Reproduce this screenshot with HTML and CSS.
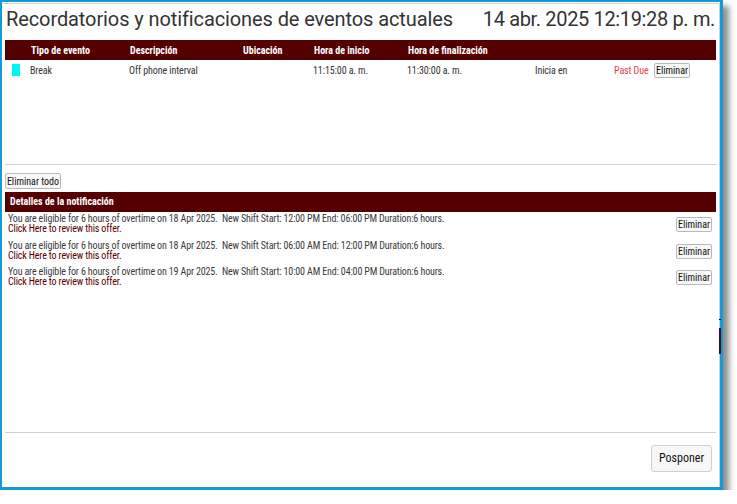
FILE: index.html
```html
<!DOCTYPE html>
<html lang="es">
<head>
<meta charset="utf-8">
<link rel="stylesheet" href="styles.css">
</head>
<body>
<div class="dialog">
  <div class="frame">
    <div class="title-row">
      <h1 class="title">Recordatorios y notificaciones de eventos actuales</h1>
      <div class="clock">14 abr. 2025 12:19:28 p. m.</div>
    </div>

    <div class="events">
      <div class="grid head">
        <span></span>
        <span>Tipo de evento</span>
        <span>Descripción</span>
        <span>Ubicación</span>
        <span>Hora de inicio</span>
        <span>Hora de finalización</span>
        <span></span>
        <span></span>
        <span></span>
      </div>
      <div class="grid row">
        <span><i class="swatch"></i></span>
        <span>Break</span>
        <span>Off phone interval</span>
        <span></span>
        <span>11:15:00 a. m.</span>
        <span>11:30:00 a. m.</span>
        <span>Inicia en</span>
        <span class="due">Past Due</span>
        <span><button class="btn del">Eliminar</button></span>
      </div>
    </div>

    <div class="clear-row"><button class="btn all">Eliminar todo</button></div>

    <div class="notifs">
      <div class="bar">Detalles de la notificación</div>
      <div class="notif">
        <div class="msg">
          <div>You are eligible for 6 hours of overtime on 18 Apr 2025.&nbsp; New Shift Start: 12:00 PM End: 06:00 PM Duration:6 hours.</div>
          <a class="link">Click Here to review this offer.</a>
        </div>
        <button class="btn del">Eliminar</button>
      </div>
      <div class="notif">
        <div class="msg">
          <div>You are eligible for 6 hours of overtime on 18 Apr 2025.&nbsp; New Shift Start: 06:00 AM End: 12:00 PM Duration:6 hours.</div>
          <a class="link">Click Here to review this offer.</a>
        </div>
        <button class="btn del">Eliminar</button>
      </div>
      <div class="notif">
        <div class="msg">
          <div>You are eligible for 6 hours of overtime on 19 Apr 2025.&nbsp; New Shift Start: 10:00 AM End: 04:00 PM Duration:6 hours.</div>
          <a class="link">Click Here to review this offer.</a>
        </div>
        <button class="btn del">Eliminar</button>
      </div>
    </div>

    <div class="footer"><button class="btn big">Posponer</button></div>
  </div>
  <span class="peek peek-line"></span>
  <span class="peek peek-bar"></span>
</div>
</body>
</html>
```
FILE: styles.css
```css
* { box-sizing: border-box; }
body {
  margin: 0;
  background: #fff;
  font-family: Roboto, "Liberation Sans", sans-serif;
  color: #333;
}
.dialog {
  position: relative;
  width: 723px;
  height: 490px;
  border-style: solid;
  border-color: #119bd8;
  border-width: 2px 3px 3px 2px;
  background: #fff;
  box-shadow: 6px 6px 6px rgba(0, 0, 0, 0.45);
}
.frame {
  margin-top: 1px;
  height: 484px;
  border-top: 1px solid #cfcfcf;
  border-right: 1px solid #cfcfcf;
  padding: 0 3px 0 3px;
  display: flex;
  flex-direction: column;
}
.title-row {
  height: 36px;
  display: flex;
  justify-content: space-between;
  align-items: flex-start;
  padding: 3px 1px 0 1px;
}
.title, .clock {
  margin: 0;
  font-size: 20px;
  font-weight: 400;
  line-height: 24px;
  color: #333;
  font-stretch: 96%;
  letter-spacing: -0.1px;
}
.clock { letter-spacing: -0.35px; }
.events {
  height: 125px;
  border-bottom: 1px solid #cfcfcf;
}
.grid {
  display: grid;
  grid-template-columns: 25px 99px 113px 71px 94px 128px 79px 40px 1fr;
  align-items: center;
  font-size: 10px;
  font-stretch: 75%;
}
.head {
  height: 20px;
  background: #550000;
  color: #fff;
  font-weight: 700;
}
.head span { padding-left: 1px; }
.row {
  height: 20px;
  color: #333;
  letter-spacing: -0.1px;
}
.row span { display: flex; align-items: center; }
.swatch {
  display: block;
  width: 8px;
  height: 12px;
  margin-left: 7px;
  background: #00f5f5;
}
.due { color: #e2434f; }
.btn {
  font-family: Roboto, "Liberation Sans", sans-serif;
  font-size: 10px;
  font-stretch: 75%;
  line-height: 13px;
  height: 15px;
  padding: 0 2px;
  margin: 0;
  color: #111;
  background: #f8f8f8;
  border: 1px solid #b9b9b9;
  border-radius: 2px;
}
.btn.del { width: 36px; padding: 0; }
.clear-row {
  display: flex;
  align-items: flex-start;
  padding-top: 8px;
  height: 27px;
}
.btn.all { height: 16px; width: 56px; padding: 0; }
.notifs {
  flex: 1;
  border-bottom: 1px solid #cfcfcf;
}
.bar {
  height: 20px;
  line-height: 20px;
  background: #550000;
  color: #fff;
  font-weight: 700;
  font-size: 10px;
  font-stretch: 75%;
  padding-left: 5px;
}
.notif {
  display: flex;
  justify-content: space-between;
  align-items: flex-start;
  padding: 2px 4px 4px 3px;
  height: 26.5px;
}
.msg {
  font-size: 10px;
  line-height: 10px;
  font-stretch: 75%;
  letter-spacing: -0.15px;
  color: #3a3a3a;
}
.link {
  display: block;
  color: #550000;
}
.notif .btn { margin-top: 3px; }
.footer {
  height: 54px;
  display: flex;
  justify-content: flex-end;
  align-items: flex-start;
  padding: 12px 4px 0 0;
}
.btn.big {
  font-size: 12px;
  font-stretch: 85%;
  height: 27px;
  width: 61px;
  line-height: 25px;
  border-color: #cfcfcf;
  border-radius: 3px;
  background: #f7f7f7;
  color: #111;
}
.peek {
  position: absolute;
  right: -1px;
  width: 2px;
  background: #2a0a0a;
}
.peek-line { top: 317px; height: 1px; }
.peek-bar { top: 326px; height: 26px; background: #4d0a0a; }
```
